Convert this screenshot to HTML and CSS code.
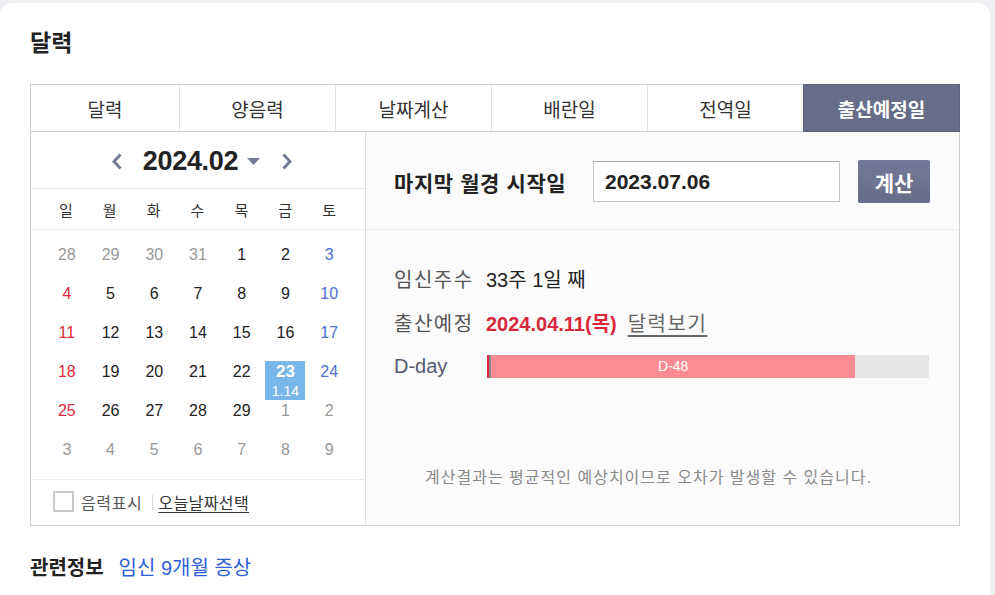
FILE: index.html
```html
<!DOCTYPE html>
<html lang="ko">
<head>
<meta charset="utf-8">
<title>달력</title>
<link rel="stylesheet" href="styles.css">
</head>
<body>
<div class="card">
  <h2 class="title">달력</h2>

  <div class="tabs">
    <div class="tab">달력</div>
    <div class="tab">양음력</div>
    <div class="tab">날짜계산</div>
    <div class="tab">배란일</div>
    <div class="tab">전역일</div>
    <div class="tab active">출산예정일</div>
  </div>

  <div class="panel">
    <div class="cal">
      <div class="cal-head">
        <svg class="arrow" width="10" height="17" viewBox="0 0 10 17"><path d="M8.5 1.5 L2 8.5 L8.5 15.5" fill="none" stroke="#747b96" stroke-width="3"/></svg>
        <span class="ym">2024.02</span>
        <svg class="caret" width="13" height="7" viewBox="0 0 13 7"><path d="M0 0 H13 L6.5 7 Z" fill="#747b96"/></svg>
        <svg class="arrow next" width="10" height="17" viewBox="0 0 10 17"><path d="M1.5 1.5 L8 8.5 L1.5 15.5" fill="none" stroke="#747b96" stroke-width="3"/></svg>
      </div>
      <div class="week">
        <span>일</span><span>월</span><span>화</span><span>수</span><span>목</span><span>금</span><span>토</span>
      </div>
      <div class="days">
        <div class="d other">28</div><div class="d other">29</div><div class="d other">30</div><div class="d other">31</div><div class="d">1</div><div class="d">2</div><div class="d sat">3</div>
        <div class="d sun">4</div><div class="d">5</div><div class="d">6</div><div class="d">7</div><div class="d">8</div><div class="d">9</div><div class="d sat">10</div>
        <div class="d sun">11</div><div class="d">12</div><div class="d">13</div><div class="d">14</div><div class="d">15</div><div class="d">16</div><div class="d sat">17</div>
        <div class="d sun">18</div><div class="d">19</div><div class="d">20</div><div class="d">21</div><div class="d">22</div><div class="d today"><span class="box"><b>23</b><small>1.14</small></span></div><div class="d sat">24</div>
        <div class="d sun">25</div><div class="d">26</div><div class="d">27</div><div class="d">28</div><div class="d">29</div><div class="d other">1</div><div class="d other">2</div>
        <div class="d other">3</div><div class="d other">4</div><div class="d other">5</div><div class="d other">6</div><div class="d other">7</div><div class="d other">8</div><div class="d other">9</div>
      </div>
      <div class="cal-foot">
        <span class="check"></span>
        <span class="lunar">음력표시</span>
        <span class="sep"></span>
        <a class="today-link">오늘날짜선택</a>
      </div>
    </div>

    <div class="calc">
      <div class="form">
        <span class="form-label">마지막 월경 시작일</span>
        <div class="input">2023.07.06</div>
        <button class="btn">계산</button>
      </div>
      <div class="result">
        <div class="row">
          <span class="lbl">임신주수</span>
          <span class="val">33주 1일 째</span>
        </div>
        <div class="row">
          <span class="lbl">출산예정</span>
          <span class="val due">2024.04.11(목)</span>
          <a class="view">달력보기</a>
        </div>
        <div class="row">
          <span class="lbl dday">D-day</span>
          <div class="bar">
            <span class="mark"></span>
            <div class="fill" style="width: 82.4%">D-48</div>
          </div>
        </div>
        <p class="note">계산결과는 평균적인 예상치이므로 오차가 발생할 수 있습니다.</p>
      </div>
    </div>
  </div>

  <div class="related">
    <strong>관련정보</strong>
    <a class="rel-link">임신 9개월 증상</a>
  </div>
</div>
</body>
</html>
```

FILE: styles.css
```css
* { box-sizing: border-box; }
html, body { margin: 0; padding: 0; }
body {
  background: #eef0f4;
  font-family: "Liberation Sans", "Noto Sans CJK KR", sans-serif;
  color: #222;
  overflow: hidden;
}
.card {
  margin: 3px 5px 0 0;
  background: #fff;
  border-radius: 12px 12px 0 0;
  padding: 26px 30px 0 30px;
  height: 620px;
}
.title {
  margin: 0 0 27px 0;
  font-size: 23px;
  line-height: 28px;
  font-weight: 700;
  color: #222;
}
.tabs {
  display: grid;
  grid-template-columns: 148px 156px 156px 156px 156px 1fr;
  border: 1px solid #cfcfcf;
  height: 48px;
}
.tab {
  display: flex;
  align-items: center;
  justify-content: center;
  font-size: 19px;
  color: #333;
  border-left: 1px solid #e2e2e2;
}
.tab:first-child { border-left: none; }
.tab.active {
  background: #676c88;
  color: #fff;
  font-weight: 700;
  margin: -1px -1px -1px 0;
  border: 1px solid #5c617c;
}
.panel {
  display: grid;
  grid-template-columns: 335px 1fr;
  border: 1px solid #cfcfcf;
  border-top: none;
  height: 394px;
}
.cal {
  border-right: 1px solid #e0e0e0;
  background: #fff;
  display: flex;
  flex-direction: column;
}
.cal-head {
  height: 57px;
  border-bottom: 1px solid #ececec;
  display: flex;
  align-items: center;
  justify-content: center;
  padding-left: 8px;
  padding-top: 2px;
}
.ym {
  font-size: 27px;
  font-weight: 700;
  color: #222;
  margin: 0 9px 0 21px;
  letter-spacing: -0.3px;
}
.caret { margin-right: 22px; }
.week {
  display: grid;
  grid-template-columns: repeat(7, 1fr);
  padding: 0 14px 0 13px;
  height: 41px;
  border-bottom: 1px solid #ececec;
  align-items: center;
  font-size: 15px;
  color: #333;
  text-align: center;
}
.days {
  display: grid;
  grid-template-columns: repeat(7, 1fr);
  grid-auto-rows: 39px;
  padding: 14px 14px 0 14px;
  height: 249px;
}
.d {
  text-align: center;
  font-size: 16px;
  line-height: 22px;
  color: #222;
}
.d.other { color: #999; }
.d.sun { color: #e0293c; }
.d.sat { color: #4c6fd2; }
.d.today { display: flex; justify-content: center; }
.box {
  width: 40px;
  height: 39px;
  background: #78b7e7;
  color: #fff;
  display: flex;
  flex-direction: column;
  align-items: center;
}
.box b { font-size: 17px; line-height: 22px; }
.box small { font-size: 14px; line-height: 16px; }
.cal-foot {
  flex: 1;
  border-top: 1px solid #ececec;
  display: flex;
  align-items: center;
  padding-left: 22px;
  padding-bottom: 2px;
  font-size: 16px;
}
.check {
  width: 21px;
  height: 21px;
  border: 2px solid #c9c9c9;
  background: #fff;
  margin-right: 7px;
}
.lunar { color: #555; letter-spacing: 0.6px; }
.sep {
  width: 1px;
  height: 15px;
  background: #d6d6d6;
  margin: 2px 5px 0 10px;
}
.today-link {
  color: #333;
  letter-spacing: 0.4px;
  text-decoration: underline;
  text-underline-offset: 3px;
}
.calc {
  background: #fbfbfb;
  display: flex;
  flex-direction: column;
}
.form {
  height: 98px;
  border-bottom: 1px solid #ececec;
  display: flex;
  align-items: center;
  padding: 2px 0 0 28px;
}
.form-label {
  font-size: 21px;
  font-weight: 700;
  color: #222;
  letter-spacing: 0.6px;
  width: 199px;
}
.input {
  width: 247px;
  height: 41px;
  border: 1px solid #c6c6c6;
  border-top-color: #a9a9a9;
  background: #fff;
  font-size: 21px;
  font-weight: 700;
  color: #222;
  padding-left: 11px;
  line-height: 39px;
}
.btn {
  margin-left: 18px;
  width: 72px;
  height: 43px;
  border: none;
  border-radius: 2px;
  background: linear-gradient(#74799a, #666b86);
  color: #fff;
  font-family: inherit;
  font-size: 21px;
  font-weight: 700;
  padding: 0;
}
.result {
  flex: 1;
  padding: 26px 30px 0 28px;
  display: flex;
  flex-direction: column;
}
.row {
  display: flex;
  align-items: center;
  height: 44px;
  font-size: 20px;
}
.lbl {
  width: 92px;
  color: #555;
  letter-spacing: 1.5px;
}
.lbl.dday { color: #555b72; letter-spacing: 0; }
.val { color: #222; }
.due {
  color: #d7283c;
  font-weight: 700;
}
.view {
  margin-left: 11px;
  color: #666;
  letter-spacing: 1.5px;
  text-decoration: underline;
  text-underline-offset: 4px;
}
.bar {
  flex: 1;
  margin-left: 1px;
  height: 23px;
  background: #e6e6e6;
  display: flex;
}
.mark {
  width: 4px;
  border-left: 2px solid #df283c;
  background: #8a8a8a;
}
.fill {
  background: #fe8b93;
  color: #fff;
  font-size: 14px;
  line-height: 23px;
  text-align: center;
}
.note {
  margin: 76px 0 0 0;
  padding-right: 26px;
  text-align: center;
  font-size: 16px;
  color: #8a8a8a;
  letter-spacing: 1px;
  white-space: nowrap;
}
.related {
  margin-top: 26px;
  display: flex;
  align-items: center;
  gap: 15px;
  font-size: 20px;
}
.related strong { color: #222; }
.rel-link { color: #2e5fd8; }
```
